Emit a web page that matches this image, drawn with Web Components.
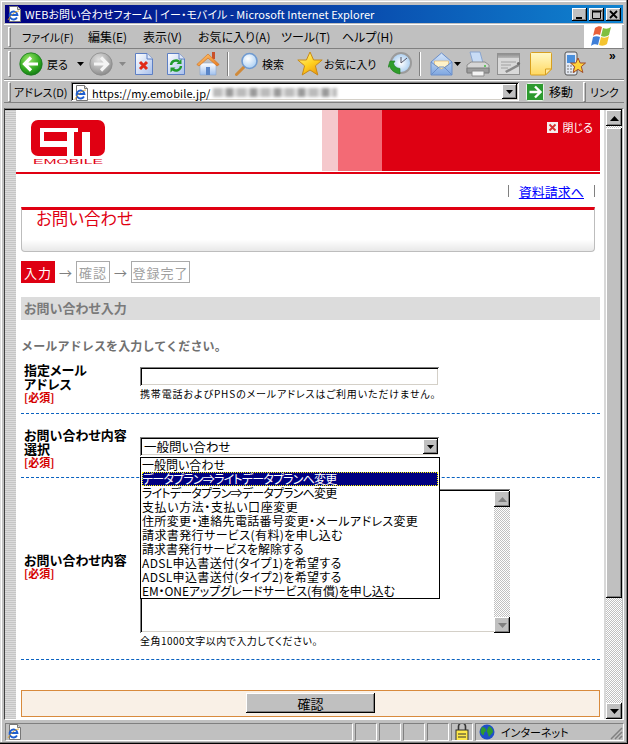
<!DOCTYPE html>
<html lang="ja">
<head>
<meta charset="utf-8">
<title>WEBお問い合わせフォーム</title>
<style>
  html, body { margin: 0; padding: 0; background: #c0c0c0; }
  body { font: 12px "Noto Sans CJK JP", sans-serif; font-feature-settings: "palt"; color: #000; }
</style>
</head>
<body>
<ie-window>
  <ie-titlebar label="WEBお問い合わせフォーム | イー・モバイル - Microsoft Internet Explorer"></ie-titlebar>
  <ie-menubar></ie-menubar>
  <ie-toolbar></ie-toolbar>
  <ie-addressbar url="https://my.emobile.jp/"></ie-addressbar>
  <ie-viewport>
    <em-header></em-header>
    <em-links></em-links>
    <em-title>お問い合わせ</em-title>
    <em-steps></em-steps>
    <em-section>お問い合わせ入力</em-section>
    <em-lead>メールアドレスを入力してください。</em-lead>

    <em-row style="--pad:2px;--shift:6px;--h:52px">
      <em-label>指定メール<br>アドレス</em-label>
      <em-input></em-input>
      <em-help spaced>携帯電話およびPHSのメールアドレスはご利用いただけません。</em-help>
    </em-row>

    <em-row style="--pad:14px;--shift:23px;--h:63px">
      <em-label>お問い合わせ内容<br>選択</em-label>
      <em-select value="一般問い合わせ">
        <em-option>一般問い合わせ</em-option>
        <em-option selected style="letter-spacing:-.8px">データプラン⇒ライトデータプランへ変更</em-option>
        <em-option style="letter-spacing:-.8px">ライトデータプラン⇒データプランへ変更</em-option>
        <em-option style="letter-spacing:.6px">支払い方法・支払い口座変更</em-option>
        <em-option style="letter-spacing:.36px">住所変更・連絡先電話番号変更・メールアドレス変更</em-option>
        <em-option style="letter-spacing:.4px">請求書発行サービス(有料)を申し込む</em-option>
        <em-option>請求書発行サービスを解除する</em-option>
        <em-option style="letter-spacing:.35px">ADSL申込書送付(タイプ1)を希望する</em-option>
        <em-option style="letter-spacing:.35px">ADSL申込書送付(タイプ2)を希望する</em-option>
        <em-option style="letter-spacing:-.1px">EM・ONEアップグレードサービス(有償)を申し込む</em-option>
      </em-select>
    </em-row>

    <em-row style="--pad:0px;--pad-b:4px;--shift:11px;--h:181px;--label-align:center">
      <em-label>お問い合わせ内容</em-label>
      <em-textarea></em-textarea>
      <em-help>全角1000文字以内で入力してください。</em-help>
    </em-row>

    <em-confirm>確認</em-confirm>
  </ie-viewport>
  <ie-statusbar zone="インターネット"></ie-statusbar>
</ie-window>

<script>
// classic win9x bevels, used by most of the chrome
const RAISED = 'box-shadow: inset -1px -1px #000, inset 1px 1px #fff, inset -2px -2px #808080;';
const SUNKEN = 'box-shadow: inset 1px 1px #808080, inset -1px -1px #fff, inset 2px 2px #000, inset -2px -2px #d4d0c8;';
const CHECKER = 'background: repeating-conic-gradient(#c0c0c0 0 25%, #fff 0 50%) 0 0 / 2px 2px;';
const GRIP = 'flex: none; width: 1px; margin-left: 4px; border: 1px solid; border-color: #fff #808080 #808080 #fff;';

// gradient ids must stay unique: several icons share the toolbar's shadow root
const ICONS = {
  back: `<svg width="24" height="24" viewBox="0 0 24 24"><defs><radialGradient id="gb" cx=".4" cy=".3" r=".8"><stop offset="0" stop-color="#9be76a"/><stop offset=".6" stop-color="#2fa81f"/><stop offset="1" stop-color="#0c6b12"/></radialGradient></defs><circle cx="12" cy="12" r="11.200" fill="url(#gb)" stroke="#1c7a20" stroke-width=".8"/><path d="M12 5.500 5.500 12l6.500 6.500M6.500 12H19" fill="none" stroke="#fff" stroke-width="3.200"/></svg>`,
  forward: `<svg width="24" height="24" viewBox="0 0 24 24"><defs><radialGradient id="gf" cx=".4" cy=".3" r=".8"><stop offset="0" stop-color="#e2e2e2"/><stop offset=".6" stop-color="#a9a9a9"/><stop offset="1" stop-color="#808080"/></radialGradient></defs><circle cx="12" cy="12" r="11.200" fill="url(#gf)" stroke="#8c8c8c" stroke-width=".8"/><path d="M12 5.500 18.500 12 12 18.500M17.500 12H5" fill="none" stroke="#f4f4f4" stroke-width="3.200"/></svg>`,
  stop: `<svg width="20" height="24" viewBox="0 0 20 24"><defs><linearGradient id="gs" x2="1" y2="1"><stop offset="0" stop-color="#fff"/><stop offset="1" stop-color="#a8c0ec"/></linearGradient></defs><path d="M1.500 1.500H13l5.500 5.500v15.500H1.500z" fill="url(#gs)" stroke="#5d7fc4"/><path d="M13 1.500V7h5.500" fill="#dfe8f8" stroke="#5d7fc4"/><path d="m6 10 7 7m0-7-7 7" stroke="#e02a1a" stroke-width="3"/></svg>`,
  refresh: `<svg width="20" height="24" viewBox="0 0 20 24"><defs><linearGradient id="gr" x2="1" y2="1"><stop offset="0" stop-color="#fff"/><stop offset="1" stop-color="#a8c0ec"/></linearGradient></defs><path d="M1.500 1.500H13l5.500 5.500v15.500H1.500z" fill="url(#gr)" stroke="#5d7fc4"/><path d="M13 1.500V7h5.500" fill="#dfe8f8" stroke="#5d7fc4"/><path d="M5 13a5 5 0 0 1 8-3.500M15 14a5 5 0 0 1-8 3.500" fill="none" stroke="#1f9a2c" stroke-width="2.400"/><path d="m15.500 7v5h-5zM4.500 20.500v-5h5z" fill="#1f9a2c"/></svg>`,
  home: `<svg width="24" height="26" viewBox="0 0 24 26"><defs><linearGradient id="gh" x2="0" y2="1"><stop offset="0" stop-color="#fff"/><stop offset="1" stop-color="#9fc0ee"/></linearGradient><linearGradient id="gh2" x2="1" y2="1"><stop offset="0" stop-color="#ffc873"/><stop offset="1" stop-color="#e87a1e"/></linearGradient></defs><rect x="16" y="1" width="3" height="7" fill="#c9502a"/><path d="M4 12h16v12H4z" fill="url(#gh)" stroke="#8aa5cf" stroke-width=".6"/><path d="M10 16h4v8h-4z" fill="#5b86c8"/><path d="M.8 13.500 12 3l11.200 10.500-2.200 1.500L12 7 3 15z" fill="url(#gh2)" stroke="#d06c1a" stroke-width=".6"/></svg>`,
  search: `<svg width="24" height="24" viewBox="0 0 24 24"><defs><radialGradient id="gq" cx=".4" cy=".35" r=".8"><stop offset="0" stop-color="#fff"/><stop offset="1" stop-color="#9cc7f2"/></radialGradient></defs><path d="M1.500 22.500 9 15" stroke="#d08a3a" stroke-width="3" stroke-linecap="round"/><circle cx="14.500" cy="9" r="7.500" fill="url(#gq)" stroke="#6f9ad0" stroke-width="1.600"/></svg>`,
  star: `<svg width="26" height="26" viewBox="0 0 26 26"><defs><linearGradient id="gy" x2=".6" y2="1"><stop offset="0" stop-color="#fff59a"/><stop offset=".6" stop-color="#ffd21f"/><stop offset="1" stop-color="#f0a010"/></linearGradient></defs><path d="m13 1 3.600 8h8.600l-6.800 5.800 2.400 9.200L13 19l-7.800 5 2.400-9.200L.8 9h8.600z" fill="url(#gy)" stroke="#c88a18"/></svg>`,
  history: `<svg width="24" height="24" viewBox="0 0 24 24"><defs><radialGradient id="gc"><stop offset="0" stop-color="#fff"/><stop offset="1" stop-color="#a9cdf0"/></radialGradient></defs><circle cx="13" cy="11" r="10" fill="url(#gc)" stroke="#9b9b9b" stroke-width="2"/><path d="M13 11l6-5M13 11v-6" stroke="#556" stroke-width="1"/><path d="M2 9h5l-1.500 2.500c1 3 3 4.500 6.500 5v5.500c-6-1-9-4-10.500-8L0 15.500z" fill="#2f9d2a" stroke="#1c7a20" stroke-width=".6"/></svg>`,
  mail: `<svg width="23" height="26" viewBox="0 0 23 26"><defs><linearGradient id="gm" x2="0" y2="1"><stop offset="0" stop-color="#d5e6fb"/><stop offset="1" stop-color="#7fa7e0"/></linearGradient></defs><path d="M1 11 11.500 2 22 11v13H1z" fill="url(#gm)" stroke="#6b8fca"/><path d="M4.500 10h14v4l-7 4-7-4z" fill="#fff2c9" stroke="#e0b060" stroke-width=".6"/><path d="m1 24 8-8h5l8 8M1 11l8 6M22 11l-8 6" fill="none" stroke="#6b8fca"/></svg>`,
  print: `<svg width="24" height="26" viewBox="0 0 24 26"><path d="M4 1h10l3 11H7z" fill="#c8dcf5" stroke="#8aa5cf"/><path d="M1 14l4-3h14l4 3v7H1z" fill="#d6d6d6" stroke="#8e8e8e"/><path d="M1 17h22v5H1z" fill="#9c9c9c" stroke="#7a7a7a"/><path d="M6 20h12v5H6z" fill="#f4f4f4" stroke="#8e8e8e"/><circle cx="19" cy="15" r="1" fill="#3fbf3f"/></svg>`,
  edit: `<svg width="24" height="22" viewBox="0 0 24 22"><defs><linearGradient id="ge" x2="0" y2="1"><stop offset="0" stop-color="#8e8e8e"/><stop offset="1" stop-color="#b8b8b8"/></linearGradient></defs><rect x=".5" y=".5" width="22" height="21" fill="#d9d9d9" stroke="#909090"/><rect x="1" y="1" width="21" height="4" fill="url(#ge)"/><path d="M4 9h15M4 12h10M4 15h7" stroke="#a0a0a0"/><path d="M8 18l13-7 1.500 2-13 7z" fill="#8a8a8a"/><circle cx="21.500" cy="10.500" r="1.600" fill="#6e6e6e"/></svg>`,
  note: `<svg width="22" height="24" viewBox="0 0 22 24"><defs><linearGradient id="gn" x2="0" y2="1"><stop offset="0" stop-color="#fff9c8"/><stop offset="1" stop-color="#ffd860"/></linearGradient></defs><path d="M.5 1.500Q.5.500 1.500.500h19q1 0 1 1V17l-6 6h-14q-1 0-1-1z" fill="url(#gn)" stroke="#d8a020"/><path d="M21.500 17h-6v6z" fill="#ffe9a0" stroke="#d8a020"/></svg>`,
  mobile: `<svg width="22" height="26" viewBox="0 0 22 26"><rect x="1" y="1" width="12" height="23" rx="2" fill="#e4e9f2" stroke="#555"/><rect x="3" y="4" width="8" height="8" fill="#4a8fdc"/><path d="M3 15h8M3 18h8M3 21h8" stroke="#777" stroke-dasharray="2 1"/><path d="m14 7 2.200 5h5.300l-4.200 3.600 1.600 5.900-4.900-3.100-4.900 3.100 1.600-5.900L6.500 12h5.300z" fill="#ffd33a" stroke="#a04a28"/></svg>`,
  go: `<svg width="18" height="18" viewBox="0 0 18 18"><rect x=".5" y=".5" width="17" height="17" rx="1" fill="#2d9a2f" stroke="#e8f4e8"/><path d="M9 3.500 14.500 9 9 14.500M13.500 9H3.500" fill="none" stroke="#fff" stroke-width="2.400"/></svg>`,
  page: `<svg width="15" height="16" viewBox="0 0 15 16"><path d="M2.500 .5h8l3 3v12h-11z" fill="#fff" stroke="#777"/><path d="M10.500 .5v3h3" fill="#ddd" stroke="#777"/><path d="M10 11.500A4 4 0 1 1 10.500 9H3" fill="none" stroke="#1f5fd0" stroke-width="1.800"/><path d="M1 14C3 10 8 5 12 5" fill="none" stroke="#e0a020" stroke-width=".8"/></svg>`,
  lock: `<svg width="14" height="20" viewBox="0 0 14 20"><path d="M3.500 8V4.500a3.500 3.500 0 0 1 7 0V8" fill="none" stroke="#333" stroke-width="1.600"/><rect x="1" y="8" width="12" height="11" fill="#ffe84a" stroke="#333"/><path d="M3 12h8M3 15h8" stroke="#333"/></svg>`,
  globe: `<svg width="16" height="16" viewBox="0 0 16 16"><circle cx="8" cy="8" r="7.500" fill="#1f4fc8"/><path d="M3 3c2 0 4 1 4 3S5 8 5 10 3 11 2 9s0-4 1-6zM10 2c2 1 4 3 4 6-1 2-3 3-4 5-1-2-1-4-2-5s1-4 2-6z" fill="#2e9a30"/></svg>`,
  flag: `<svg width="26" height="24" viewBox="0 0 26 24"><path d="M5 3c3-2 5-2 7-1l-2 8c-2-1-5-1-7 1z" fill="#e8603a"/><path d="M13 3c3 1 5 1 8-1l-2 8c-3 2-5 2-8 1z" fill="#7fbf3f"/><path d="M3 12c2-1 5-1 7 0l-2 8c-2-1-5-1-7 1z" fill="#3f7fd8"/><path d="M11 12c3 1 5 1 8-1l-2 8c-3 2-5 2-8 1z" fill="#f4c430"/></svg>`,
};

class ShadowBase extends HTMLElement {
  constructor() {
    super();

    this.attachShadow({ mode: 'open' });
  }

  connectedCallback() {
    this.render();
  }
}

class IeWindow extends ShadowBase {
  render() {
    this.shadowRoot.innerHTML = `
      <style>
        :host {
          display: flex;
          flex-direction: column;
          box-sizing: border-box;
          width: 628px;
          height: 744px;
          padding: 4px 4px 0;
          overflow: hidden;
          background: #c0c0c0;
          box-shadow: inset -1px -1px #000, inset -2px -2px #808080, inset 1px 1px #dfdfdf, inset 2px 2px #fff;
        }
      </style>
      <slot></slot>
    `;
  }
}

class IeTitlebar extends ShadowBase {
  render() {
    this.shadowRoot.innerHTML = `
      <style>
        :host {
          display: flex;
          align-items: center;
          flex: none;
          height: 18px;
          margin: 1px 1px 1px 1px;
          padding-right: 2px;
          background: linear-gradient(90deg, #000080, #1084d0);
          color: #fff;
        }
        .icon { display: flex; margin-left: 2px; }
        .label { flex: 1; margin-left: 3px; white-space: nowrap; font-size: 11px; letter-spacing: .05px; }
        .btn {
          display: flex;
          align-items: center;
          justify-content: center;
          width: 15px;
          height: 13px;
          margin-left: 2px;
          background: #c0c0c0;
          ${RAISED}
        }
      </style>
      <span class="icon">${ICONS.page}</span>
      <span class="label">${this.getAttribute('label')}</span>
      <span class="btn"><svg width="9" height="9"><path d="M1 7h6v2H1z"/></svg></span>
      <span class="btn"><svg width="10" height="9"><path d="M.5 1.500h8v7h-8zM0 0h9v2H0z" fill="none" stroke="#000"/></svg></span>
      <span class="btn"><svg width="9" height="9"><path d="m1 1 7 7m0-7-7 7" stroke="#000" stroke-width="1.800"/></svg></span>
    `;
  }
}

class IeMenubar extends ShadowBase {
  render() {
    // slot widths keep each entry at its place whatever the text measures
    const items = [
      ['ファイル(F)', 66, 11], ['編集(E)', 55, 12], ['表示(V)', 55, 12],
      ['お気に入り(A)', 83, 12], ['ツール(T)', 61, 12], ['ヘルプ(H)', 50, 12],
    ];
    this.shadowRoot.innerHTML = `
      <style>
        :host {
          display: flex;
          align-items: center;
          flex: none;
          box-sizing: border-box;
          height: 25px;
          border-top: 1px solid #fff;
          border-bottom: 1px solid #808080;
        }
        .grip { ${GRIP} height: 18px; margin-right: 11px; }
        .item { flex: none; white-space: nowrap; }
        .flag { display: flex; align-items: center; justify-content: center; width: 38px; height: 23px; margin: 0 2px 0 auto; background: #fff; }
      </style>
      <span class="grip"></span>
      ${items.map(([text, width, size]) => `<span class="item" style="width:${width}px;font-size:${size}px">${text}</span>`).join('')}
      <span class="flag">${ICONS.flag}</span>
    `;
  }
}

class IeToolbar extends ShadowBase {
  render() {
    const caret = (color) => `<svg width="7" height="4"><path d="M0 0h7L3.500 4z" fill="${color}"/></svg>`;
    const items = [
      [ICONS.back, 28], ['戻る', 30], [caret('#000'), 12], [ICONS.forward, 30], [caret('#888'), 15],
      [ICONS.stop, 32], [ICONS.refresh, 30], [ICONS.home, 31], ['<b class="sep"></b>', 8], [ICONS.search, 27],
      ['検索', 35], [ICONS.star, 27], ['お気に入り', 64], [ICONS.history, 31], ['<b class="sep"></b>', 11],
      [ICONS.mail, 24], [caret('#000'), 12], [ICONS.print, 31], [ICONS.edit, 33], [ICONS.note, 34],
      [ICONS.mobile, 45], ['<b class="more">»</b>', 12],
    ];
    this.shadowRoot.innerHTML = `
      <style>
        :host {
          display: flex;
          align-items: center;
          flex: none;
          box-sizing: border-box;
          height: 31px;
          border-bottom: 1px solid #808080;
          font-size: 11px;
        }
        .grip { ${GRIP} height: 24px; margin-right: 8px; }
        .cell { display: flex; flex: none; white-space: nowrap; }
        .sep { display: block; width: 1px; height: 24px; background: #808080; border-right: 1px solid #fff; }
        .more { font: bold 12px "Liberation Sans", sans-serif; position: relative; top: -8px; }
      </style>
      <span class="grip"></span>
      ${items.map(([html, width]) => `<span class="cell" style="width:${width}px">${html}</span>`).join('')}
    `;
  }
}

class IeAddressbar extends ShadowBase {
  render() {
    this.shadowRoot.innerHTML = `
      <style>
        :host {
          display: flex;
          align-items: center;
          flex: none;
          box-sizing: border-box;
          height: 23px;
          border-top: 1px solid #fff;
          border-bottom: 1px solid #808080;
        }
        .grip { ${GRIP} height: 18px; }
        .label, .go, .links { flex: none; white-space: nowrap; }
        .label { width: 57px; margin-left: 3px; font-size: 11px; }
        .field {
          display: flex;
          align-items: center;
          flex: none;
          width: 448px;
          height: 19px;
          box-sizing: border-box;
          padding: 2px 0 0 3px;
          background: #fff;
          ${SUNKEN}
        }
        .url { margin-left: 3px; font-size: 11px; letter-spacing: .1px; white-space: nowrap; }
        .blur { width: 124px; height: 9px; margin-left: 2px; filter: blur(1.5px);
          background: repeating-linear-gradient(90deg, #bbb 0 9px, #e0e0e0 9px 13px, #999 13px 20px, #ddd 20px 24px); }
        .drop {
          display: flex;
          align-items: center;
          justify-content: center;
          width: 15px;
          height: 15px;
          margin: -2px 2px 0 auto;
          background: #c0c0c0;
          ${RAISED}
        }
        .go-icon { display: flex; margin-left: 7px; }
        .go { width: 30px; margin-left: 5px; }
        .grip.small { margin-left: 4px; }
        .links { margin-left: 4px; font-size: 11px; }
      </style>
      <span class="grip"></span>
      <span class="label">アドレス(D)</span>
      <span class="field">
        ${ICONS.page}
        <span class="url">${this.getAttribute('url')}</span>
        <span class="blur"></span>
        <span class="drop"><svg width="7" height="4"><path d="M0 0h7L3.500 4z"/></svg></span>
      </span>
      <span class="go-icon">${ICONS.go}</span>
      <span class="go">移動</span>
      <span class="grip small"></span>
      <span class="links">リンク</span>
    `;
  }
}

class IeScrollbar extends ShadowBase {
  render() {
    const thumb = this.getAttribute('thumb');
    this.shadowRoot.innerHTML = `
      <style>
        :host {
          display: flex;
          flex-direction: column;
          flex: none;
          width: 16px;
          ${CHECKER}
        }
        .btn {
          display: flex;
          align-items: center;
          justify-content: center;
          flex: none;
          height: 16px;
          background: #c0c0c0;
          ${RAISED}
        }
        .thumb { flex: none; background: #c0c0c0; ${RAISED} }
        .track { flex: 1; }
        svg { fill: var(--arrow, #000); }
      </style>
      <span class="btn"><svg width="9" height="5"><path d="M4.500 0 9 5H0z"/></svg></span>
      ${thumb ? `<span class="thumb" style="height:${thumb}px;margin-top:2px"></span>` : ''}
      <span class="track"></span>
      <span class="btn"><svg width="9" height="5"><path d="M0 0h9L4.500 5z"/></svg></span>
    `;
  }
}

class IeViewport extends ShadowBase {
  render() {
    this.shadowRoot.innerHTML = `
      <style>
        :host {
          display: flex;
          flex: none;
          box-sizing: border-box;
          height: 612px;
          margin-top: 5px;
          border-top: 1px solid #808080;
          border-left: 1px solid #404040;
          border-bottom: 1px solid #fff;
          border-right: 1px solid #fff;
        }
        .strip {
          flex: none;
          width: 11px;
          border-top: 1px solid #000;
          background: repeating-linear-gradient(0deg, #c6c6c6 0 1px, #dcdcdc 1px 2px);
        }
        .page {
          flex: none;
          box-sizing: border-box;
          width: 588px;
          padding: 0 4px 0 5px;
          overflow: hidden;
          background: #fff;
          border-top: 1px solid #000;
        }
        .gap { flex: none; width: 2px; background: #d8d8d8; border-top: 1px solid #000; }
        ie-scrollbar { border-top: 1px solid #000; }
      </style>
      <span class="strip"></span>
      <div class="page"><slot></slot></div>
      <span class="gap"></span>
      <ie-scrollbar thumb="470"></ie-scrollbar>
    `;
  }
}

class IeStatusbar extends ShadowBase {
  render() {
    this.shadowRoot.innerHTML = `
      <style>
        :host {
          display: flex;
          flex: none;
          gap: 2px;
          height: 18px;
          margin: 3px 0 0 1px;
          align-items: stretch;
          font-size: 11px;
        }
        .cell {
          display: flex;
          align-items: center;
          box-sizing: border-box;
          flex: none;
          border: 1px solid;
          border-color: #808080 #fff #fff #808080;
        }
        .main { width: 348px; padding-left: 1px; }
        .slot { width: 22px; }
        .lock { width: 22px; justify-content: center; overflow: hidden; }
        .zone { flex: 1; padding-left: 3px; gap: 6px; white-space: nowrap; position: relative; }
        .zone svg:last-child { position: absolute; right: 0; bottom: 0; }
      </style>
      <span class="cell main">${ICONS.page}</span>
      <span class="cell slot"></span>
      <span class="cell slot"></span>
      <span class="cell slot"></span>
      <span class="cell slot"></span>
      <span class="cell lock">${ICONS.lock}</span>
      <span class="cell zone">${ICONS.globe}${this.getAttribute('zone')}
        <svg width="13" height="13"><path d="M12 1 1 12M12 5l-7 7M12 9l-3 3" stroke="#808080" stroke-width="1.500"/></svg>
      </span>
    `;
  }
}

class EmHeader extends ShadowBase {
  render() {
    this.shadowRoot.innerHTML = `
      <style>
        :host {
          display: flex;
          height: 61px;
          margin: 0 0 1px -5px;
          border-bottom: 2px solid #e00012;
          padding-bottom: 1px;
        }
        .logo { flex: none; width: 306px; padding: 10px 0 0 14px; box-sizing: border-box; }
        .logo svg { display: block; }
        .band { flex: none; }
        .pale { width: 16px; background: #f5c8cc; }
        .pink { width: 44px; background: #f36a75; }
        .red {
          flex: 1;
          display: flex;
          justify-content: flex-end;
          align-items: center;
          gap: 5px;
          padding: 0 7px 27px 0;
          background: #de0012;
          color: #fff;
          font-size: 11px;
        }
        .x { display: flex; }
      </style>
      <div class="logo">
        <svg width="78" height="46" viewBox="0 0 78 46">
          <rect x="1" y="0" width="74" height="36" rx="7" fill="#e00012"/>
          <path fill="#fff" d="M10 8h38v4h-4v24h-7V12H14v9h23v6H10z"/>
          <rect x="52" y="12" width="8" height="24" fill="#fff"/>
          <text x="3" y="44" textLength="70" lengthAdjust="spacingAndGlyphs" font-family="Liberation Sans" font-size="6.500" fill="#e00012">EMOBILE</text>
        </svg>
      </div>
      <span class="band pale"></span>
      <span class="band pink"></span>
      <div class="band red">
        <span class="x"><svg width="11" height="11"><rect width="11" height="11" fill="#f4eded"/><path d="m2.500 2.500 6 6m0-6-6 6" stroke="#d83030" stroke-width="1.800"/></svg></span>
        <span>閉じる</span>
      </div>
    `;
  }
}

class EmLinks extends ShadowBase {
  render() {
    this.shadowRoot.innerHTML = `
      <style>
        :host {
          display: flex;
          justify-content: flex-end;
          align-items: center;
          height: 32px;
          padding-right: 5px;
          font-size: 13px;
        }
        .sep { width: 1px; height: 12px; background: #808080; }
        a { margin: 0 10px; color: #0000ff; text-decoration: underline; white-space: nowrap; }
      </style>
      <span class="sep"></span>
      <a href="#">資料請求へ</a>
      <span class="sep"></span>
    `;
  }
}

class EmTitle extends ShadowBase {
  render() {
    this.shadowRoot.innerHTML = `
      <style>
        :host {
          display: block;
          box-sizing: border-box;
          height: 45px;
          margin-right: 5px;
          padding: 0 0 0 14px;
          border: 1px solid #bdbdbd;
          border-top: 3px solid #e00012;
          border-radius: 0 0 4px 4px;
          background: linear-gradient(#fff 72%, #e8e8e8);
          color: #e00012;
          font-size: 16.500px;
          line-height: 17px;
        }
      </style>
      <slot></slot>
    `;
  }
}

class EmSteps extends ShadowBase {
  render() {
    this.shadowRoot.innerHTML = `
      <style>
        :host {
          display: flex;
          align-items: center;
          height: 22px;
          margin-top: 9px;
          font-size: 13px;
          color: #a0a0a0;
        }
        .step {
          display: flex;
          align-items: center;
          justify-content: center;
          box-sizing: border-box;
          height: 22px;
          border: 1px solid #aaa;
          white-space: nowrap;
          letter-spacing: 1px;
        }
        .on { width: 34px; background: #de0012; border-color: #de0012; color: #fff; }
        .two { width: 34px; }
        .four { width: 59px; }
        .arrow { width: 21px; text-align: center; color: #808080; line-height: 1; }
      </style>
      <span class="step on">入力</span>
      <span class="arrow">→</span>
      <span class="step two">確認</span>
      <span class="arrow">→</span>
      <span class="step four">登録完了</span>
    `;
  }
}

class EmSection extends ShadowBase {
  render() {
    this.shadowRoot.innerHTML = `
      <style>
        :host {
          display: block;
          height: 23px;
          margin-top: 14px;
          padding-left: 3px;
          background: #dcdcdc;
          color: #7a7a7a;
          font-size: 13px;
          font-weight: bold;
          line-height: 22px;
        }
      </style>
      <slot></slot>
    `;
  }
}

class EmLead extends ShadowBase {
  render() {
    this.shadowRoot.innerHTML = `
      <style>
        :host {
          display: block;
          height: 24px;
          margin-top: 17px;
          color: #707070;
          font-size: 12px;
          font-feature-settings: normal;
          font-weight: bold;
          letter-spacing: .15px;
          line-height: 18px;
        }
      </style>
      <slot></slot>
    `;
  }
}

class EmRow extends ShadowBase {
  render() {
    this.shadowRoot.innerHTML = `
      <style>
        :host {
          display: grid;
          grid-template-columns: 119px 1fr;
          box-sizing: content-box;
          height: var(--h);
          border-bottom: 1px dashed #0a62c0;
        }
        .label {
          align-self: var(--label-align, start);
          padding: var(--pad) 0 var(--pad-b, 0) 3px;
        }
        .req { color: #d40000; font-size: 11px; font-weight: bold; line-height: 14px; display: block; }
        .body { padding-top: var(--shift); }
      </style>
      <div class="label">
        <slot name="label"></slot>
        <span class="req">[必須]</span>
      </div>
      <div class="body"><slot></slot></div>
    `;
    this.querySelector('em-label')?.setAttribute('slot', 'label');
  }
}

class EmLabel extends ShadowBase {
  render() {
    this.shadowRoot.innerHTML = `
      <style>
        :host {
          display: block;
          font-size: 13px;
          font-weight: bold;
          line-height: 13.500px;
        }
      </style>
      <slot></slot>
    `;
  }
}

class EmInput extends ShadowBase {
  render() {
    this.shadowRoot.innerHTML = `
      <style>
        :host {
          display: block;
          box-sizing: border-box;
          width: 299px;
          height: 19px;
          background: #fff;
          ${SUNKEN}
        }
      </style>
    `;
  }
}

class EmHelp extends ShadowBase {
  render() {
    this.shadowRoot.innerHTML = `
      <style>
        :host {
          display: block;
          margin-top: 1px;
          font-size: 10px;
          line-height: 14px;
          white-space: nowrap;
          ${this.hasAttribute('spaced') ? 'letter-spacing: .85px;' : 'letter-spacing: .45px;'}
        }
      </style>
      <slot></slot>
    `;
  }
}

class EmSelect extends ShadowBase {
  render() {
    this.shadowRoot.innerHTML = `
      <style>
        :host {
          display: block;
          position: relative;
          width: 299px;
          height: 19px;
        }
        .field {
          display: flex;
          align-items: center;
          box-sizing: border-box;
          height: 19px;
          padding: 0 1px 0 4px;
          background: #fff;
          ${SUNKEN}
        }
        .field span:first-child { flex: 1; font-size: 12.500px; }
        .drop {
          display: flex;
          align-items: center;
          justify-content: center;
          width: 15px;
          height: 15px;
          background: #c0c0c0;
          ${RAISED}
        }
        .list {
          position: absolute;
          z-index: 2;
          top: 20px;
          left: 0;
          width: 300px;
          box-sizing: border-box;
          padding: 0 1px;
          border: 1px solid #000;
          background: #fff;
        }
      </style>
      <div class="field">
        <span>${this.getAttribute('value')}</span>
        <span class="drop"><svg width="7" height="4"><path d="M0 0h7L3.500 4z"/></svg></span>
      </div>
      <div class="list"><slot></slot></div>
    `;
  }
}

class EmOption extends ShadowBase {
  render() {
    const selected = this.hasAttribute('selected');
    this.shadowRoot.innerHTML = `
      <style>
        :host {
          display: block;
          box-sizing: border-box;
          height: 14px;
          font-size: 12px;
          line-height: 14px;
          white-space: nowrap;
          ${selected ? 'background: #000080; color: #fff; outline: 1px dotted #ff0; outline-offset: -1px;' : ''}
        }
      </style>
      <slot></slot>
    `;
  }
}

class EmTextarea extends ShadowBase {
  render() {
    this.shadowRoot.innerHTML = `
      <style>
        :host {
          display: flex;
          justify-content: flex-end;
          box-sizing: border-box;
          width: 370px;
          height: 144px;
          padding: 2px 0 0 2px;
          background: #fff;
          ${SUNKEN}
          --arrow: #808080;
        }
        ie-scrollbar { height: 100%; }
      </style>
      <ie-scrollbar></ie-scrollbar>
    `;
  }
}

class EmConfirm extends ShadowBase {
  render() {
    this.shadowRoot.innerHTML = `
      <style>
        :host {
          display: flex;
          justify-content: center;
          box-sizing: border-box;
          height: 27px;
          margin-top: 30px;
          padding-top: 2px;
          background: #f9f0e6;
          border: 1px solid #d88a3c;
        }
        .btn {
          display: flex;
          align-items: center;
          justify-content: center;
          width: 129px;
          height: 20px;
          background: #c0c0c0;
          font-size: 13px;
          ${RAISED}
        }
      </style>
      <span class="btn"><slot></slot></span>
    `;
  }
}

customElements.define('ie-window', IeWindow);
customElements.define('ie-titlebar', IeTitlebar);
customElements.define('ie-menubar', IeMenubar);
customElements.define('ie-toolbar', IeToolbar);
customElements.define('ie-addressbar', IeAddressbar);
customElements.define('ie-scrollbar', IeScrollbar);
customElements.define('ie-viewport', IeViewport);
customElements.define('ie-statusbar', IeStatusbar);
customElements.define('em-header', EmHeader);
customElements.define('em-links', EmLinks);
customElements.define('em-title', EmTitle);
customElements.define('em-steps', EmSteps);
customElements.define('em-section', EmSection);
customElements.define('em-lead', EmLead);
customElements.define('em-label', EmLabel);
customElements.define('em-row', EmRow);
customElements.define('em-input', EmInput);
customElements.define('em-help', EmHelp);
customElements.define('em-select', EmSelect);
customElements.define('em-option', EmOption);
customElements.define('em-textarea', EmTextarea);
customElements.define('em-confirm', EmConfirm);
</script>
</body>
</html>
